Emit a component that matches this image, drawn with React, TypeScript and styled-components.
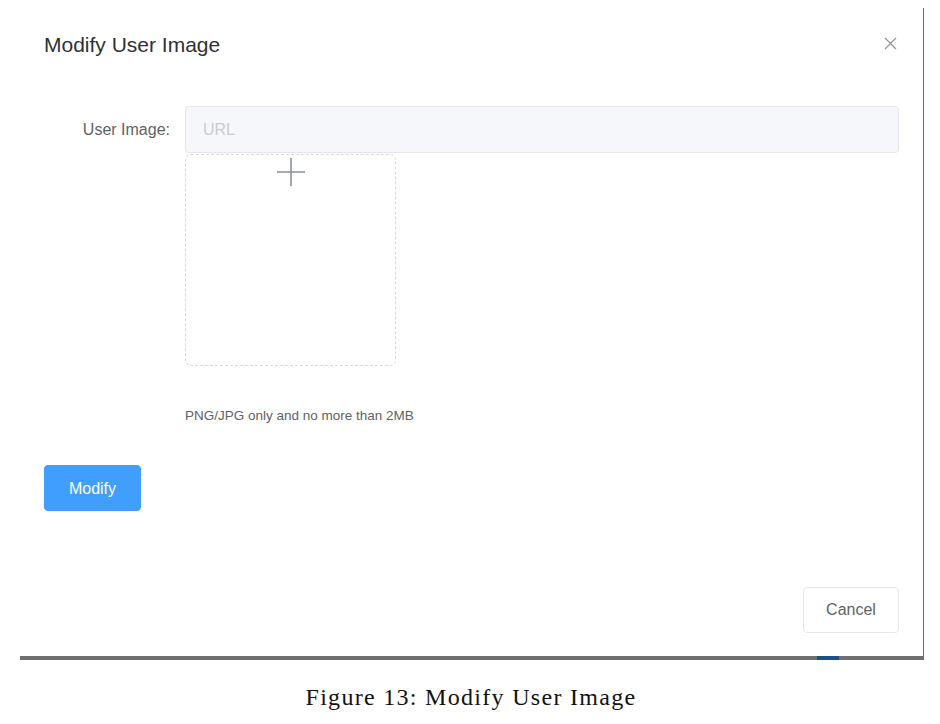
import React from "react";
import styled, { createGlobalStyle } from "styled-components";

const Global = createGlobalStyle`
  html, body { margin: 0; padding: 0; background: #ffffff; }
  body { font-family: "Liberation Sans", Arial, sans-serif; }
  * { box-sizing: border-box; }
`;

const Page = styled.div`
  width: 940px;
  height: 724px;
  padding-top: 8px;
  display: flex;
  flex-direction: column;
  background: #fff;
`;

const Frame = styled.div`
  margin-left: 20px;
  width: 904px;
  height: 648px;
  border-right: 1px solid #6e6e6e;
  display: flex;
  flex-direction: column;
  padding: 0 24px 23px 24px;
  background: #fff;
`;

const Header = styled.div`
  display: flex;
  align-items: center;
  justify-content: space-between;
  padding-top: 21px;
  height: 56px;
`;

const Title = styled.div`
  font-size: 21px;
  line-height: 24px;
  color: #303133;
  margin-top: -3px;
`;

const CloseButton = styled.button`
  border: none;
  background: none;
  padding: 0;
  margin-right: 2px;
  width: 14px;
  height: 14px;
  display: flex;
  align-items: center;
  justify-content: center;
  cursor: pointer;
  margin-top: -6px;
`;

const FormRow = styled.div`
  margin-top: 42px;
  display: grid;
  grid-template-columns: 141px 1fr;
`;

const Label = styled.label`
  font-size: 16px;
  line-height: 47px;
  height: 47px;
  color: #606266;
  text-align: right;
  padding-right: 15px;
`;

const Field = styled.div`
  display: flex;
  flex-direction: column;
`;

const UrlInput = styled.input`
  height: 47px;
  width: 100%;
  border: 1px solid #e4e7ed;
  border-radius: 4px;
  background: #f5f7fa;
  padding: 0 17px;
  font-family: "Liberation Sans", Arial, sans-serif;
  font-size: 16px;
  color: #c0c4cc;
  outline: none;
  &::placeholder { color: #c8cbd2; }
`;

const UploadBox = styled.div`
  margin-top: 1px;
  width: 211px;
  height: 212px;
  border: 1px dashed #d9d9d9;
  border-radius: 6px;
  display: flex;
  justify-content: center;
  padding-top: 3px;
`;

const Hint = styled.div`
  margin-top: 40px;
  font-size: 13.5px;
  line-height: 20px;
  color: #606266;
`;

const Actions = styled.div`
  margin-top: 39px;
  display: flex;
`;

const Button = styled.button<{ $primary?: boolean }>`
  height: 46px;
  width: ${(p) => (p.$primary ? "97px" : "96px")};
  border-radius: 4px;
  font-family: "Liberation Sans", Arial, sans-serif;
  font-size: 16px;
  cursor: pointer;
  padding-top: ${(p) => (p.$primary ? "3px" : "0")};
  border: 1px solid ${(p) => (p.$primary ? "#409eff" : "#e6e8ec")};
  background: ${(p) => (p.$primary ? "#409eff" : "#ffffff")};
  color: ${(p) => (p.$primary ? "#ffffff" : "#606266")};
`;

const Footer = styled.div`
  margin-top: auto;
  display: flex;
  justify-content: flex-end;
`;

const BottomBar = styled.div`
  margin-left: 20px;
  width: 904px;
  height: 4px;
  display: flex;
`;

const BarSegment = styled.div<{ $w?: number; $blue?: boolean }>`
  height: 4px;
  ${(p) => (p.$w ? `width: ${p.$w}px;` : "flex: 1;")}
  background: ${(p) => (p.$blue ? "#1f4d86" : "#707070")};
`;

const Caption = styled.div`
  margin-top: 23px;
  text-align: center;
  font-family: "Liberation Serif", "Times New Roman", serif;
  font-size: 24px;
  line-height: 28px;
  letter-spacing: 1.3px;
  color: #111;
  padding-left: 2px;
`;

export default function App() {
  return (
    <>
      <Global />
      <Page>
        <Frame>
          <Header>
            <Title>Modify User Image</Title>
            <CloseButton aria-label="Close">
              <svg width="13" height="13" viewBox="0 0 13 13">
                <path d="M1 1 L12 12 M12 1 L1 12" stroke="#909399" strokeWidth="1.2" fill="none" />
              </svg>
            </CloseButton>
          </Header>
          <FormRow>
            <Label>User Image:</Label>
            <Field>
              <UrlInput placeholder="URL" />
              <UploadBox>
                <svg width="28" height="28" viewBox="0 0 28 28">
                  <path d="M14 0 V28 M0 14 H28" stroke="#8c939d" strokeWidth="1.6" fill="none" />
                </svg>
              </UploadBox>
              <Hint>PNG/JPG only and no more than 2MB</Hint>
            </Field>
          </FormRow>
          <Actions>
            <Button $primary>Modify</Button>
          </Actions>
          <Footer>
            <Button>Cancel</Button>
          </Footer>
        </Frame>
        <BottomBar>
          <BarSegment $w={797} />
          <BarSegment $w={22} $blue />
          <BarSegment />
        </BottomBar>
        <Caption>Figure 13: Modify User Image</Caption>
      </Page>
    </>
  );
}
